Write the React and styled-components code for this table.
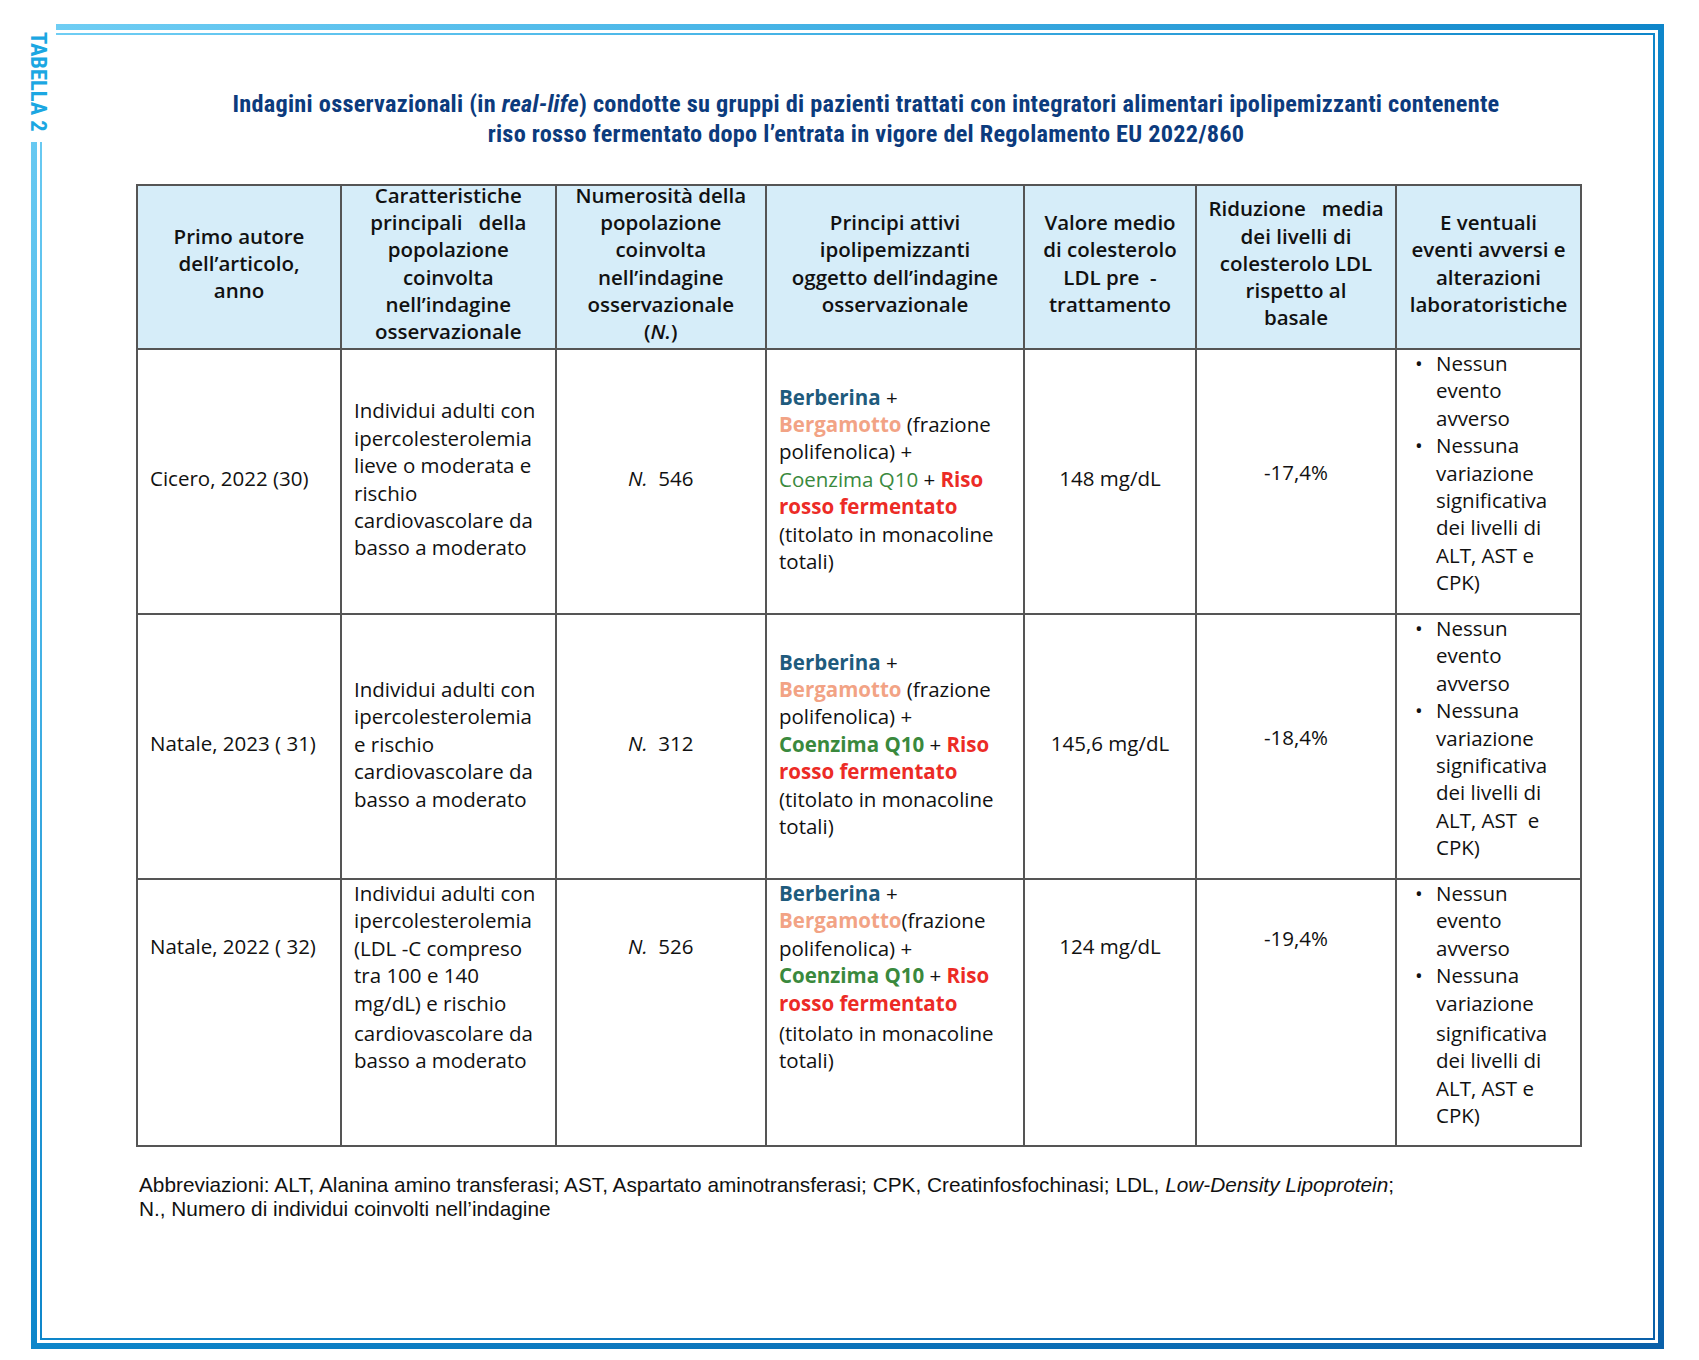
import React from 'react';
import styled, { createGlobalStyle } from 'styled-components';

const GlobalStyle = createGlobalStyle`
  html, body { margin: 0; padding: 0; background: #ffffff; }
  body { font-family: "Open Sans", "Noto Sans", sans-serif; }
`;

const FRAME_GRADIENT =
  'linear-gradient(to bottom right, #70cef4 0%, #48b5e7 22%, #0e86ca 50%, #0a60a9 100%)';

const Page = styled.div`
  box-sizing: border-box;
  width: 1699px;
  padding: 24px 0 12px 31px;
`;

const OuterFrame = styled.div`
  position: relative;
  box-sizing: border-box;
  width: 1633px;
  height: 1325px;
  border: 6px solid #0e86ca;
  border-image: ${FRAME_GRADIENT} 1;
  padding: 3px;
`;

const InnerFrame = styled.div`
  box-sizing: border-box;
  height: 100%;
  border: 2px solid #0e86ca;
  border-image: ${FRAME_GRADIENT} 1;
  padding: 54px 0 0 94px;
  display: flex;
  flex-direction: column;
  align-items: flex-start;
`;

const CornerTab = styled.div`
  position: absolute;
  top: -6px;
  left: -6px;
  width: 25px;
  height: 118px;
  background: #ffffff;
  display: flex;
  flex-direction: column;
  align-items: flex-start;
  padding-top: 8px;
  box-sizing: border-box;
`;

const TabLabel = styled.span`
  writing-mode: vertical-rl;
  font-family: "Liberation Sans Narrow", "Roboto Condensed", "DejaVu Sans Condensed", sans-serif;
  font-stretch: condensed;
  font-weight: 700;
  font-size: 22.5px;
  line-height: 16px;
  color: #1ba7e2;
  white-space: nowrap;
`;

const Title = styled.h1`
  box-sizing: border-box;
  width: 1444px;
  margin: 0;
  padding-left: 16px;
  text-align: center;
  font-family: "Liberation Sans Narrow", "Roboto Condensed", "DejaVu Sans Condensed", sans-serif;
  font-stretch: condensed;
  font-weight: 700;
  font-size: 24.3px;
  letter-spacing: 0.25px;
  line-height: 30px;
  color: #0c3b7d;
  white-space: nowrap;
`;

const Table = styled.table`
  margin-top: 35px;
  width: 1444px;
  border-collapse: collapse;
  table-layout: fixed;
  font-family: "Open Sans", "Noto Sans", sans-serif;
  font-size: 20.5px;
  line-height: 27.4px;
  color: #111111;
`;

const HeadRow = styled.tr`
  height: 164px;
`;

const BodyRow = styled.tr`
  height: ${(p) => p.$h}px;
`;

const HeadCell = styled.th`
  border: 2px solid #555555;
  background: #d6edf9;
  font-weight: 600;
  line-height: 27.3px;
  text-align: center;
  vertical-align: middle;
  padding: 0 4px;
  white-space: nowrap;
`;

const HeadText = styled.div`
  margin-top: -7px;
`;

const Cell = styled.td`
  border: 2px solid #555555;
  text-align: ${(p) => (p.$center ? 'center' : 'left')};
  vertical-align: ${(p) => (p.$top ? 'top' : 'middle')};
  padding: ${(p) => p.$pt || 0}px 6px ${(p) => p.$pb || 0}px
    ${(p) => (p.$center ? 6 : 12)}px;
  white-space: nowrap;
`;

const Line = styled.div`
  margin-top: ${(p) => (p.$gap ? 3 : 0)}px;
`;

const Em = styled.i`
  font-style: italic;
`;

const Active = styled.span`
  font-weight: ${(p) => (p.$light ? 400 : 700)};
  color: ${(p) => p.$color};
`;

const BulletList = styled.ul`
  list-style: none;
  margin: 0;
  padding: 0;
`;

const BulletItem = styled.li`
  display: flex;
`;

const BulletDot = styled.span`
  flex: none;
  width: 21px;
  padding-left: 6px;
`;

const Footnote = styled.p`
  margin: 26px 0 0 3px;
  font-family: "Liberation Sans", Arial, sans-serif;
  font-size: 20.8px;
  line-height: 24px;
  color: #111111;
  white-space: nowrap;
`;

const COLS = [204, 214.5, 210.5, 258, 172, 200, 185];

const BLUE = '#1f5b7d';
const PEACH = '#f2a385';
const GREEN = '#3a893d';
const RED = '#ec2b26';

const Lines = ({ lines, gapAt = -1 }) =>
  lines.map((l, i) => (
    <Line key={i} $gap={i === gapAt}>
      {l}
    </Line>
  ));

const headers = [
  ['Primo autore', 'dell’articolo,', 'anno'],
  ['Caratteristiche', 'principali\u00a0\u00a0 della', 'popolazione', 'coinvolta', 'nell’indagine', 'osservazionale'],
  [
    'Numerosità della',
    'popolazione',
    'coinvolta',
    'nell’indagine',
    'osservazionale',
    <>
      (<Em>N.</Em>)
    </>,
  ],
  ['Principi attivi', 'ipolipemizzanti', 'oggetto dell’indagine', 'osservazionale'],
  ['Valore medio', 'di colesterolo', 'LDL pre\u00a0 -', 'trattamento'],
  ['Riduzione\u00a0\u00a0 media', 'dei livelli di', 'colesterolo LDL', 'rispetto al', 'basale'],
  ['E ventuali', 'eventi avversi e', 'alterazioni', 'laboratoristiche'],
];

const activeLines = (lightCoenz, tightBerg) => [
  <>
    <Active $color={BLUE}>Berberina</Active> +
  </>,
  <>
    <Active $color={PEACH}>Bergamotto</Active>
    {tightBerg ? '' : ' '}(frazione
  </>,
  'polifenolica) +',
  <>
    <Active $color={GREEN} $light={lightCoenz}>
      Coenzima Q10
    </Active>{' '}
    + <Active $color={RED}>Riso</Active>
  </>,
  <Active $color={RED}>rosso fermentato</Active>,
  '(titolato in monacoline',
  'totali)',
];

const rows = [
  {
    author: 'Cicero, 2022 (30)',
    pop: ['Individui adulti con', 'ipercolesterolemia', 'lieve o moderata e', 'rischio', 'cardiovascolare da', 'basso a moderato'],
    n: '546',
    ldl: '148 mg/dL',
    red: '-17,4%',
    alt: 'ALT, AST e',
    lightCoenz: true,
    tightBerg: false,
    layout: 'middle',
    height: 265,
  },
  {
    author: 'Natale, 2023 ( 31)',
    pop: ['Individui adulti con', 'ipercolesterolemia', 'e rischio', 'cardiovascolare da', 'basso a moderato'],
    n: '312',
    ldl: '145,6 mg/dL',
    red: '-18,4%',
    alt: 'ALT, AST\u00a0 e',
    lightCoenz: false,
    tightBerg: false,
    layout: 'middle',
    height: 265,
  },
  {
    author: 'Natale, 2022 ( 32)',
    pop: [
      'Individui adulti con',
      'ipercolesterolemia',
      '(LDL -C compreso',
      'tra 100 e 140',
      'mg/dL) e rischio',
      'cardiovascolare da',
      'basso a moderato',
    ],
    n: '526',
    ldl: '124 mg/dL',
    red: '-19,4%',
    alt: 'ALT, AST e',
    lightCoenz: false,
    tightBerg: true,
    layout: 'top',
    height: 267,
    split: true,
  },
];

const Bullets = ({ alt, split }) => (
  <BulletList>
    <BulletItem>
      <BulletDot>•</BulletDot>
      <div>
        <Lines lines={['Nessun', 'evento', 'avverso']} />
      </div>
    </BulletItem>
    <BulletItem>
      <BulletDot>•</BulletDot>
      <div>
        <Lines
          lines={['Nessuna', 'variazione', 'significativa', 'dei livelli di', alt, 'CPK)']}
          gapAt={split ? 2 : -1}
        />
      </div>
    </BulletItem>
  </BulletList>
);

const DataRow = ({ row }) => {
  const top = row.layout === 'top';
  const gap = row.split ? 5 : -1;
  return (
    <BodyRow $h={row.height}>
      <Cell $top={top} $pt={top ? 53 : 0} $pb={top ? 0 : 5}>
        {row.author}
      </Cell>
      <Cell $top={top} $pb={top ? 0 : 4}>
        <Lines lines={row.pop} gapAt={gap} />
      </Cell>
      <Cell $center $top={top} $pt={top ? 53 : 0} $pb={top ? 0 : 5}>
        <Em>N.</Em>
        {'\u00a0 '}
        {row.n}
      </Cell>
      <Cell $top={top} $pb={top ? 0 : 4}>
        <Lines lines={activeLines(row.lightCoenz, row.tightBerg)} gapAt={gap} />
      </Cell>
      <Cell $center $top={top} $pt={top ? 53 : 0} $pb={top ? 0 : 5}>
        {row.ldl}
      </Cell>
      <Cell $center $top={top} $pt={top ? 45 : 0} $pb={top ? 0 : 18}>
        {row.red}
      </Cell>
      <Cell $top>
        <Bullets alt={row.alt} split={row.split} />
      </Cell>
    </BodyRow>
  );
};

export default function App() {
  return (
    <Page>
      <GlobalStyle />
      <OuterFrame>
        <CornerTab>
          <TabLabel>TABELLA 2</TabLabel>
        </CornerTab>
        <InnerFrame>
          <Title>
            Indagini osservazionali (in <i>real-life</i>) condotte su gruppi di pazienti trattati con
            integratori alimentari ipolipemizzanti contenente
            <br />
            riso rosso fermentato dopo l’entrata in vigore del Regolamento EU 2022/860
          </Title>
          <Table>
            <colgroup>
              {COLS.map((w, i) => (
                <col key={i} style={{ width: `${w}px` }} />
              ))}
            </colgroup>
            <thead>
              <HeadRow>
                {headers.map((h, i) => (
                  <HeadCell key={i}>
                    <HeadText>
                      <Lines lines={h} />
                    </HeadText>
                  </HeadCell>
                ))}
              </HeadRow>
            </thead>
            <tbody>
              {rows.map((r, i) => (
                <DataRow key={i} row={r} />
              ))}
            </tbody>
          </Table>
          <Footnote>
            Abbreviazioni: ALT, Alanina amino transferasi; AST, Aspartato aminotransferasi; CPK,
            Creatinfosfochinasi; LDL, <i>Low-Density Lipoprotein</i>;
            <br />
            N., Numero di individui coinvolti nell’indagine
          </Footnote>
        </InnerFrame>
      </OuterFrame>
    </Page>
  );
}
